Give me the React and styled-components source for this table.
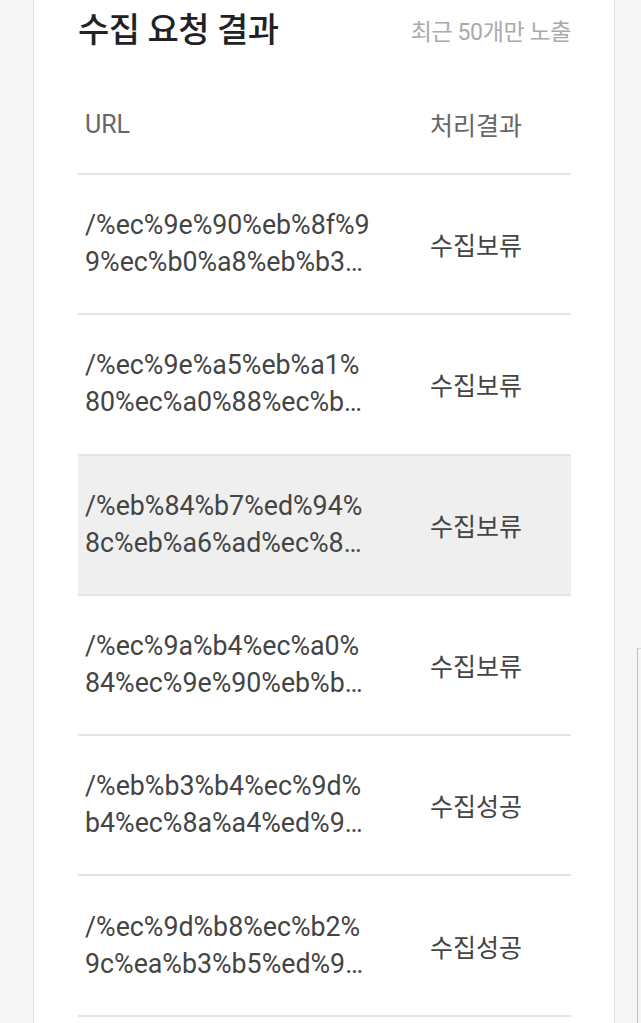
import React from 'react';
import styled, { createGlobalStyle } from 'styled-components';

const GlobalStyle = createGlobalStyle`
  html, body {
    margin: 0;
    padding: 0;
    background: #f6f6f6;
  }
  body {
    font-family: Roboto, "Noto Sans CJK KR", "Noto Sans", sans-serif;
    overflow: hidden;
  }
`;

const Page = styled.div`
  padding: 0 26px 0 33px;
`;

const Card = styled.section`
  background: #fff;
  border: 1px solid #e2e2e2;
  border-top: none;
  padding: 0 43px 0 44px;
  min-height: 1100px;
`;

const TitleRow = styled.div`
  display: flex;
  align-items: center;
  justify-content: space-between;
  height: 54px;
  padding-bottom: 21px;
`;

const Title = styled.h2`
  margin: 0;
  font-size: 34px;
  font-weight: 500;
  color: #222;
  letter-spacing: -0.5px;
`;

const Note = styled.span`
  font-size: 23px;
  color: #aaa;
  letter-spacing: -0.4px;
  padding-top: 6px;
`;

const Row = styled.div`
  display: grid;
  grid-template-columns: 1fr 141px;
  align-items: center;
  box-sizing: border-box;
  height: ${p => (p.head ? '100px' : '140.3px')};
  border-bottom: 2px solid #e4e4e4;
  background: ${p => (p.active ? '#efefef' : 'transparent')};
`;

const HeadCell = styled.div`
  font-size: 25px;
  color: #666;
  padding-left: ${p => (p.first ? '7px' : '0')};
`;

const UrlCell = styled.div`
  padding-left: 7px;
  max-width: 288.5px;
  font-size: 26.75px;
  line-height: 37px;
  color: #444;
  word-break: break-all;
  display: -webkit-box;
  -webkit-line-clamp: 2;
  -webkit-box-orient: vertical;
  overflow: hidden;
`;

const Status = styled.div`
  font-size: 25px;
  color: #444;
`;

const ScrollThumb = styled.div`
  position: fixed;
  right: 0;
  top: 648px;
  bottom: 0;
  width: 3px;
  border-left: 1px solid #bdbdbd;
  border-top: 1px solid #d8d8d8;
`;

const rows = [
  { url: '/%ec%9e%90%eb%8f%99%ec%b0%a8%eb%b3%b4%ed%97%98', status: '수집보류' },
  { url: '/%ec%9e%a5%eb%a1%80%ec%a0%88%ec%b0%a8%ec%9d%98', status: '수집보류' },
  { url: '/%eb%84%b7%ed%94%8c%eb%a6%ad%ec%8a%a4%ec%9a%94', status: '수집보류', active: true },
  { url: '/%ec%9a%b4%ec%a0%84%ec%9e%90%eb%b3%b4%ed%97%98', status: '수집보류' },
  { url: '/%eb%b3%b4%ec%9d%b4%ec%8a%a4%ed%94%bc%ec%8b%b1', status: '수집성공' },
  { url: '/%ec%9d%b8%ec%b2%9c%ea%b3%b5%ed%95%ad%ec%a3%bc', status: '수집성공' },
  { url: '/%ec%84%9c%ec%9a%b8%ec%97%ad%ea%b7%bc%ec%b2%98', status: '수집성공' },
];

export default function App() {
  return (
    <>
      <GlobalStyle />
      <Page>
        <Card>
          <TitleRow>
            <Title>수집 요청 결과</Title>
            <Note>최근 50개만 노출</Note>
          </TitleRow>
          <Row head>
            <HeadCell first>URL</HeadCell>
            <HeadCell>처리결과</HeadCell>
          </Row>
          {rows.map((r, i) => (
            <Row key={i} active={r.active}>
              <UrlCell>{r.url}</UrlCell>
              <Status>{r.status}</Status>
            </Row>
          ))}
        </Card>
      </Page>
      <ScrollThumb />
    </>
  );
}
